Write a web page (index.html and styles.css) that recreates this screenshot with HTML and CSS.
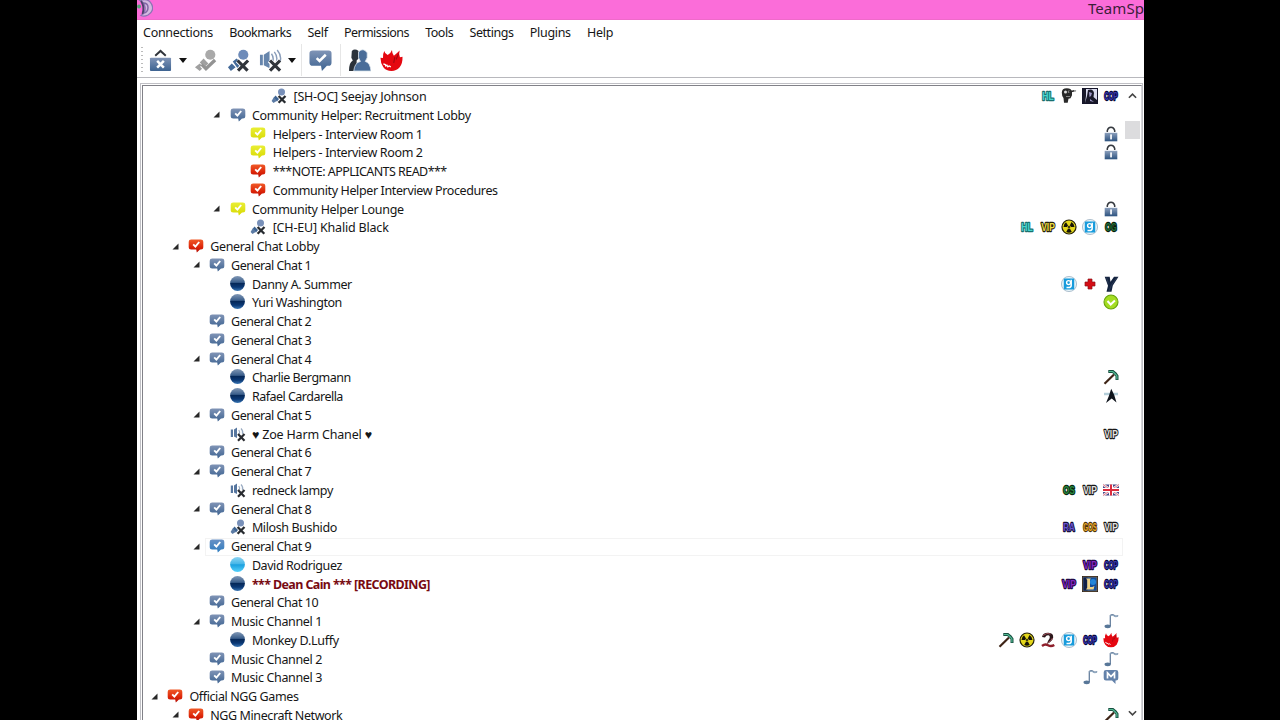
FILE: index.html
```html
<!DOCTYPE html>
<html lang="en">
<head>
<meta charset="utf-8">
<title>TeamSpeak</title>
<link rel="stylesheet" href="styles.css">
</head>
<body>
<svg class="defs" aria-hidden="true">
  <defs>
    <linearGradient id="gBlue" x1="0" y1="0" x2="0" y2="1"><stop offset="0" stop-color="#8094b6"/><stop offset="1" stop-color="#3d6391"/></linearGradient>
    <linearGradient id="gHot" x1="0" y1="0" x2="0" y2="1"><stop offset="0" stop-color="#6991c5"/><stop offset="1" stop-color="#2c7cc0"/></linearGradient>
    <linearGradient id="gYellow" x1="0" y1="0" x2="0" y2="1"><stop offset="0" stop-color="#e9ee35"/><stop offset="1" stop-color="#d8d900"/></linearGradient>
    <linearGradient id="gRed" x1="0" y1="0" x2="0" y2="1"><stop offset="0" stop-color="#f05a28"/><stop offset=".6" stop-color="#dc2408"/><stop offset="1" stop-color="#b40d05"/></linearGradient>
    <linearGradient id="gBall" x1="0" y1="0" x2="0" y2="1"><stop offset="0" stop-color="#8097b5"/><stop offset=".42" stop-color="#3b5f8c"/><stop offset=".5" stop-color="#06295a"/><stop offset=".75" stop-color="#0b3976"/><stop offset="1" stop-color="#3a76b3"/></linearGradient>
    <linearGradient id="gTalk" x1="0" y1="0" x2="0" y2="1"><stop offset="0" stop-color="#8bd4f2"/><stop offset=".45" stop-color="#48b7e8"/><stop offset=".52" stop-color="#1ba0df"/><stop offset="1" stop-color="#55d0fa"/></linearGradient>
    <linearGradient id="gLock" x1="0" y1="0" x2="0" y2="1"><stop offset="0" stop-color="#8b9fbc"/><stop offset="1" stop-color="#2c527f"/></linearGradient>
  </defs>
  <symbol id="bubble" viewBox="0 0 16 16"><path d="M3.200 1.500h9.600q2.500 0 2.500 2.300v5.200q0 2.500-2.500 2.500h-.8L8.800 14.600l-.6-3.100H3.200Q.7 11.500.7 9V3.800q0-2.300 2.500-2.300z"/><path d="M5.200 6.400l2.200 2.200L11.200 4" fill="none" stroke="#fff" stroke-width="1.900"/></symbol>
  <symbol id="ball" viewBox="0 0 16 16"><circle cx="7.500" cy="7.500" r="7.400"/></symbol>
  <symbol id="mic" viewBox="0 0 16 16"><circle cx="10.500" cy="4" r="3.500" fill="#7890b9"/><path d="M4.500 7.500l3.500 3.500-2 2.500-3.500-3.500z" fill="#3e6492"/><path d="M2.600 9.500L6 12.800 2.500 15 .6 13z" fill="#5b7ba5"/><path d="M7.600 8l6.700 6.800M14.500 8L7.600 14.800" stroke="#272b30" stroke-width="2.300"/></symbol>
  <symbol id="spk" viewBox="0 0 16 16"><path d="M.8 3.500h2.200v7.500H.8zM4 3.500l3-2v10.500l-3-1.500z" fill="#56769f"/><path d="M8.800 4q1.400 2 .5 4M11 2.500q2.500 2.500 1.500 5.500" fill="none" stroke="#9aabc2" stroke-width="1.200"/><path d="M8 8l6.500 6.700M14.500 8L8 14.700" stroke="#292b30" stroke-width="2.200"/></symbol>
  <symbol id="lock" viewBox="0 0 16 16"><path d="M4.300 6V4.500Q5 1.200 8 1.200t3.700 3.300V6" fill="none" stroke="#363a40" stroke-width="1.500"/><rect x="1.700" y="6.800" width="12.600" height="8.500" fill="url(#gLock)"/><rect x="7.200" y="8.400" width="1.700" height="5" fill="#fff"/></symbol>
  <symbol id="rad" viewBox="0 0 16 16"><circle cx="8" cy="8" r="7" fill="#e4d71b" stroke="#242108" stroke-width="1.200"/><path d="M8 8H2.500Q2.500 5 5 3.300zM8 8l2.500-5Q13.500 5 13.500 8zM8 8l2.800 5q-2.800 1.300-5.600 0z" fill="#171508"/><circle cx="8" cy="8" r="1.500" fill="#161408" stroke="#e4d71b" stroke-width=".7"/></symbol>
  <symbol id="gmod" viewBox="0 0 16 16"><circle cx="8" cy="8" r="7.600" fill="#e4f2f8" stroke="#9fb4c4" stroke-width=".8"/><rect x="2.800" y="2.500" width="10.400" height="11" fill="#179bdc"/><circle cx="7.600" cy="6.600" r="2" fill="none" stroke="#fff" stroke-width="1.400"/><path d="M10.200 3.800v5.400q0 2.400-2.600 2.400H5.500" fill="none" stroke="#fff" stroke-width="1.500"/></symbol>
  <symbol id="cross" viewBox="0 0 16 16"><path d="M6 3h4v3h3v4h-3v3H6v-3H3V6h3z" fill="#d40c15" stroke="#8d1319" stroke-width=".7"/></symbol>
  <symbol id="why" viewBox="0 0 16 16"><path d="M1.700.8h5l.8 5L11 .8h4.500L9.800 9.500 8.500 15.800H3.500l1.500-6z" fill="#14233f"/><path d="M3.500 1.500l1.800 6M14 1.500L8.500 9 6 15" stroke="#31425d" stroke-width=".7" fill="none"/></symbol>
  <symbol id="okay" viewBox="0 0 16 16"><circle cx="8" cy="8" r="7" fill="#a4dc22" stroke="#68a50b" stroke-width="1.100"/><path d="M4.500 7l3.200 3.500 4.200-4" fill="none" stroke="#fff" stroke-width="2"/></symbol>
  <symbol id="pick" viewBox="0 0 16 16"><path d="M1.500 14.800L11 5.500" stroke="#3e2416" stroke-width="2.200"/><path d="M5.300 2.500h4.500l2.700 2.200 1.500 2.300v4" fill="none" stroke="#174f40" stroke-width="3"/><path d="M6 2.500h3.700l2.600 2.300 1.600 2.200v3.200" fill="none" stroke="#54bc94" stroke-width="1.200"/></symbol>
  <symbol id="trek" viewBox="0 0 16 16"><path d="M1 6h14" stroke="#b4ced9" stroke-width="2.500"/><path d="M8.200.8q3.600 6 5.300 13.700L8.700 10.500 3 15Q6.200 8 8.200.8z" fill="#10151d"/></symbol>
  <symbol id="note" viewBox="0 0 16 16"><path d="M7.300 13V2.500q2-1.600 4 0t3.700 0" fill="none" stroke="#667f9e" stroke-width="1.300"/><path d="M7.300 3q2-1.500 4 0 1.800 1.500 3.700-.7" fill="none" stroke="#91a8bf" stroke-width="1.100"/><ellipse cx="4.700" cy="13.300" rx="3.200" ry="1.900" fill="#587798"/></symbol>
  <symbol id="flag" viewBox="0 0 16 16"><rect y="2.500" width="16" height="11" fill="#454888"/><path d="M0 2.500l16 11M16 2.500L0 13.500" stroke="#f6e8ed" stroke-width="2.600"/><path d="M0 2.500l16 11M16 2.500L0 13.500" stroke="#d96475" stroke-width=".8"/><path d="M8 2.500v11M0 8h16" stroke="#fff" stroke-width="4"/><path d="M8 2.500v11M0 8h16" stroke="#dc2b3d" stroke-width="2"/></symbol>
  <symbol id="flame" viewBox="0 0 24 24"><path d="M4.500 2Q5 5 8 6.300 11 5 12.500 1q0 3.500 2 6Q17.500 4.500 20.500 1.500q-1.200 4 .3 7l2.700-.5q.2 7-3 11-3.500 4-8.500 4-5.500 0-8.500-4Q.4 14.500.5 9.200l2.600.3Q2.500 5.500 4.500 2z" fill="#e50710"/><path d="M15.500 8.500l-1.200 6M19.300 5l-2.500 6" stroke="#9d0810" stroke-width="1.100"/><path d="M3.500 15.500l2 .8.500 1.300 1.200-.8 1 1.700 1.300-.8 1.800 1" stroke="#fff" stroke-width="1.400" fill="none"/></symbol>
  <symbol id="two" viewBox="0 0 16 16"><path d="M2 5Q3 .5 8.500.8q5 .3 4.700 4.700-.4 3.400-6.200 6.500Q7.500 9 9.500 6.500q1-3-1.500-3.200Q6 3.300 5 5.500z" fill="#2b171a"/><path d="M3 3.500q4-3.300 7.500-1.500M12.500 6q-1 3-5 5" stroke="#a0525d" stroke-width="1" fill="none"/><path d="M2 14q3-2.500 6-.8t6.300-.2" fill="none" stroke="#8e1f2b" stroke-width="2.400"/></symbol>
  <symbol id="head" viewBox="0 0 16 16"><path d="M.8 4.500q0-4.300 5-4.300t5.200 4v3l-1.500 3-2 .5-.8 4H3L2.500 10Q.8 8 .8 4.500z" fill="#292929"/><circle cx="4.500" cy="4" r="1.500" fill="#ddd"/><circle cx="8" cy="3.800" r="1.300" fill="#888"/><path d="M8 4l5.500-1.200" stroke="#272727" stroke-width="1.500"/><circle cx="14.300" cy="2.800" r=".9" fill="#999"/><path d="M5 8.500h4" stroke="#888"/></symbol>
  <symbol id="photo" viewBox="0 0 16 16"><rect width="16" height="16" fill="#15152a"/><rect x="1" y="1" width="14" height="14" fill="#d9daed"/><path d="M1 1h3v7l-1 7H1zM6 2q5-2 6 3l-.5 4L15 12v3H3l2-7z" fill="#191929"/><path d="M7 4l3 1-1 3-1.500 1zM8 11l4 3-4-1z" fill="#9d97c6"/></symbol>
  <symbol id="league" viewBox="0 0 16 16"><rect width="16" height="16" fill="#231e23"/><rect x="1" y="1" width="14" height="14" fill="#124d9b" stroke="#97733c" stroke-width=".7"/><path d="M1.500 1.500h4v13h-4z" fill="#101f48"/><circle cx="11" cy="6" r="3" fill="#2385d9"/><path d="M4 2.500h4.800L8 4v7h2.400l2-1-.8 3.500H4l1.200-1.800V4z" fill="#efd287"/></symbol>
  <symbol id="msg" viewBox="0 0 16 16"><path d="M3 1h10q2.300 0 2.300 2.300v6q0 2.300-2.300 2.300h-.5V15L9 11.600H3Q.7 11.600.7 9.300v-6Q.7 1 3 1z" fill="#6482aa"/><path d="M4.500 9.500V3.800L8 7.500l3.500-3.700v5.700" stroke="#fff" stroke-width="1.700" fill="none"/></symbol>
</svg>

<main class="window">
  <header class="titlebar">
    <svg class="app-icon" viewBox="0 0 16 18"><path d="M3 1.500q8-3 11.500 3.500T11 16q-4 2-7 .5Q9 13 8 8T3 1.500z" fill="#d4b9e0" stroke="#8c73b5" stroke-width="1.300"/><path d="M6 4q5 0 5 4.500T7 14" fill="none" stroke="#8267a5" stroke-width="1.500"/><path d="M4 2q4 6 1.500 13" fill="none" stroke="#4b416c" stroke-width="1.800"/><circle cx="2" cy="7.500" r="2" fill="#52a878"/></svg>
    <span class="title" data-w="56">TeamSp</span>
  </header>
  <nav class="menu">
    <span data-w="70">Connections</span><span data-w="62">Bookmarks</span><span data-w="20">Self</span><span data-w="65">Permissions</span><span data-w="28">Tools</span><span data-w="44">Settings</span><span data-w="41">Plugins</span><span data-w="26">Help</span>
  </nav>
  <div class="toolbar">
    <i class="grip"></i>
    <svg class="tool conn" viewBox="0 0 24 24"><path d="M6.500 7L12 2l5.500 5" fill="none" stroke="#30343b" stroke-width="2"/><rect x="1" y="9" width="22" height="14" rx="1" fill="url(#gBlue)"/><path d="M8.500 12.500l7 7m0-7l-7 7" stroke="#fff" stroke-width="2.600"/></svg>
    <i class="drop"></i>
    <svg class="tool mute" viewBox="0 0 24 24"><circle cx="17" cy="6" r="5.300" fill="#a9a9a9"/><path d="M1 19l5-4 4 4-4 4zM6 14l4-4 5 5-4 4z" fill="#a0a0a0"/><path d="M8 17l4.500 4.500L23 12" fill="none" stroke="#fff" stroke-width="4.500"/><path d="M8 16l4.500 4.500L22 11.500" fill="none" stroke="#939393" stroke-width="3.500"/></svg>
    <svg class="tool micx" viewBox="0 0 24 24"><circle cx="17" cy="6" r="5.300" fill="#6e8bb9"/><path d="M1 19l4-4 4 4-5 4zM6 13l4-3 6 6-5 4z" fill="#456b99"/><path d="M11 12l11 11M22 12L11 23" stroke="#fff" stroke-width="5"/><path d="M11 12l10.500 10.500M22 12L11.500 22.500" stroke="#30343a" stroke-width="3.300"/></svg>
    <svg class="tool spkx" viewBox="0 0 24 24"><path d="M1 6h3v11H1zM5 6l6-4v18l-6-3z" fill="#6685ac"/><path d="M13 5q3 4 1 9M16 3q4 5 2 11M19 1q5 6 3 12" fill="none" stroke="#8a9db9" stroke-width="1.500"/><path d="M11 12l11 11M22 12L11 23" stroke="#fff" stroke-width="5"/><path d="M11.500 12L22 22.500M22 12L11.500 22.500" stroke="#30343a" stroke-width="3.300"/></svg>
    <i class="drop drop-b"></i><i class="rule rule-a"></i>
    <svg class="tool chat" viewBox="0 0 24 24"><path d="M4 1.500h16.500q3 0 3 3V14q0 3.500-3 3.500h-1.800L13.500 23l-1-5.500H4Q.5 17.500.5 14V4.500q0-3 3.500-3z" fill="url(#gBlue)"/><path d="M8 9.500l3 3L17.500 6" fill="none" stroke="#fff" stroke-width="2.600"/></svg>
    <i class="rule rule-b"></i>
    <svg class="tool people" viewBox="0 0 24 24"><path d="M4 2q3-3 7 0v8l-2 2v11H1q0-9 4-11L3.500 9z" fill="#2b323a"/><path d="M11 3q5-5 9 1v5l-2 4q5 1 6 10H6q1-9 7-10l-2-4z" fill="#4a6d99" stroke="#dce5ed" stroke-width=".8"/></svg>
    <svg class="tool fire"><use href="#flame"/></svg>
  </div>
  <section class="panel">
    <div class="tree" id="tree"></div>
    <div class="scrollbar">
      <svg viewBox="0 0 10 8"><path d="M1 6l4-4 4 4" fill="none" stroke="#444" stroke-width="1.800"/></svg>
      <i class="thumb"></i>
      <svg class="down" viewBox="0 0 10 8"><path d="M1 2l4 4 4-4" fill="none" stroke="#444" stroke-width="1.800"/></svg>
    </div>
  </section>
</main>
<script src="tree.js"></script>
</body>
</html>
```
FILE: styles.css
```css
* { box-sizing: border-box; }
body { margin: 0; width: 1280px; height: 720px; overflow: hidden; background: #000; font: 12.500px "Noto Sans", "Open Sans", sans-serif; color: #161616; }
.defs { width: 0; height: 0; display: block; }
.window { width: 1007px; height: 720px; margin-left: 137px; background: #fff; overflow: hidden; display: flex; flex-direction: column; }
.titlebar { height: 20px; flex: none; background: #fb6dd9; border-bottom: 1px solid #ef6aca; display: flex; justify-content: space-between; }
.app-icon { width: 16px; height: 18px; margin-top: -1px; }
.title { font-size: 15px; line-height: 17px; color: #3c1e39; white-space: nowrap; }
.menu { height: 24px; flex: none; display: flex; gap: 16.300px; padding-left: 6px; line-height: 25px; }
.menu span { white-space: nowrap; }
.toolbar { height: 34px; flex: none; border-bottom: 1px solid #b8b8bd; display: flex; align-items: center; padding: 0 0 1px 4px; }
.grip { width: 2px; height: 26px; background: repeating-linear-gradient(#bbb 0 1px, transparent 1px 4px); margin-right: 6px; }
.tool { width: 23px; height: 23px; flex: none; }
.drop { border: 4px solid transparent; border-top: 5px solid #111; border-bottom: 0; margin-left: 7px; }
.drop-b { margin-left: 6px; }
.mute { margin-left: 7px; }
.micx { margin-left: 10px; }
.spkx { margin-left: 9px; }
.rule { width: 1px; height: 32px; background: #e6e6e6; }
.rule-a { margin-left: 5px; }
.chat { margin-left: 7px; }
.rule-b { margin-left: 8px; }
.people { margin-left: 7px; }
.fire { margin-left: 9px; }
.panel { margin: 5px 0 0 3px; height: 637px; width: 1003px; flex: none; display: flex; border: 1px solid #c0c0c5; border-bottom: 0; padding: 1px 0 0 1px; }
.tree { flex: 1; border-left: 1px solid #818188; border-top: 1px solid #818188; padding-top: 1.200px; overflow: hidden; }
.row { height: 18.760px; display: flex; align-items: center; width: 980px; }
.row.hot .content { border: 1px solid #f3f3f3; }
.indent { flex: none; }
.arrow { flex: none; width: 7px; height: 7px; margin: 0 0 1px -.5px; }
.content { display: flex; align-items: center; flex: 1; height: 18px; margin-left: 5px; border: 1px solid transparent; }
.state { width: 16px; height: 16px; flex: none; margin: -1px 6.300px 0 3.200px; }
.label { white-space: nowrap; line-height: 18px; padding-top: 1px; }
.recording { color: #780a12; font-weight: bold; }
.badges { display: flex; gap: 5px; margin: -1px 3px 0 auto; }
.badges svg { width: 16px; height: 16px; overflow: visible; }
.badges text { font: bold 11.500px "Liberation Sans", Arial, sans-serif; paint-order: stroke; stroke-width: 2.400px; stroke-linejoin: round; }
.scrollbar { width: 18px; flex: none; border-top: 1px solid #818188; display: flex; flex-direction: column; align-items: center; padding: 6px 0 0 0; border-right: 1px solid #d4d4d8; }
.scrollbar svg { width: 9px; height: 8px; }
.thumb { width: 15px; height: 18px; background: #dcdcde; margin-top: 21px; }
.scrollbar .down { margin-top: auto; margin-bottom: 3px; }
```
FILE: tree.js
```js
// level, state icon, label, label width, expanded, badges
const rows = [
  [5, 'mic', '[SH-OC] Seejay Johnson', 133, 0, 'HL head photo COP'],
  [3, 'blue', 'Community Helper: Recruitment Lobby', 219, 1, ''],
  [4, 'yellow', 'Helpers - Interview Room 1', 150, 0, 'lock'],
  [4, 'yellow', 'Helpers - Interview Room 2', 150, 0, 'lock'],
  [4, 'red', '***NOTE: APPLICANTS READ***', 174, 0, ''],
  [4, 'red', 'Community Helper Interview Procedures', 225, 0, ''],
  [3, 'yellow', 'Community Helper Lounge', 152, 1, 'lock'],
  [4, 'mic', '[CH-EU] Khalid Black', 116, 0, 'HL VIPY rad gmod OG'],
  [1, 'red', 'General Chat Lobby', 109, 1, ''],
  [2, 'blue', 'General Chat 1', 80, 1, ''],
  [3, 'ball', 'Danny A. Summer', 100, 0, 'gmod cross why'],
  [3, 'ball', 'Yuri Washington', 90, 0, 'okay'],
  [2, 'blue', 'General Chat 2', 80, 0, ''],
  [2, 'blue', 'General Chat 3', 80, 0, ''],
  [2, 'blue', 'General Chat 4', 80, 1, ''],
  [3, 'ball', 'Charlie Bergmann', 99, 0, 'pick'],
  [3, 'ball', 'Rafael Cardarella', 91, 0, 'trek'],
  [2, 'blue', 'General Chat 5', 80, 1, ''],
  [3, 'spk', '♥ Zoe Harm Chanel ♥', 120, 0, 'VIP'],
  [2, 'blue', 'General Chat 6', 80, 0, ''],
  [2, 'blue', 'General Chat 7', 80, 1, ''],
  [3, 'spk', 'redneck lampy', 81, 0, 'OS VIP flag'],
  [2, 'blue', 'General Chat 8', 80, 1, ''],
  [3, 'mic', 'Milosh Bushido', 85, 0, 'RA GOS VIP'],
  [2, 'hot', 'General Chat 9', 80, 1, ''],
  [3, 'talk', 'David Rodriguez', 90, 0, 'VIPP COP'],
  [3, 'ball', '*** Dean Cain *** [RECORDING]', 178, 0, 'VIPP league COP'],
  [2, 'blue', 'General Chat 10', 87, 0, ''],
  [2, 'blue', 'Music Channel 1', 91, 1, 'note'],
  [3, 'ball', 'Monkey D.Luffy', 87, 0, 'pick rad two gmod COP flame'],
  [2, 'blue', 'Music Channel 2', 91, 0, 'note'],
  [2, 'blue', 'Music Channel 3', 91, 0, 'note msg'],
  [0, 'red', 'Official NGG Games', 109, 1, ''],
  [1, 'red', 'NGG Minecraft Network', 132, 1, 'pick']
];
const tags = {
  HL: ['HL', '#48d6ce', '#19706f'], COP: ['COP', '#3838b0', '#07073a'],
  VIPY: ['VIP', '#f0df45', '#25230a'], OG: ['OG', '#237039', '#071c0b'],
  VIP: ['VIP', '#e4e4e4', '#181818'], OS: ['OS', '#2b8b42', '#09270e'],
  RA: ['RA', '#6854d2', '#15103a'], GOS: ['GOS', '#edae2b', '#4b320b'],
  VIPP: ['VIP', '#8127c0', '#210844']
};
const fills = { blue: 'gBlue', yellow: 'gYellow', red: 'gRed', hot: 'gHot', ball: 'gBall', talk: 'gTalk' };
function stateIcon(kind) {
  const shape = kind === 'mic' || kind === 'spk' ? kind : kind === 'ball' || kind === 'talk' ? 'ball' : 'bubble';
  return `<svg class="state" fill="url(#${fills[kind] || 'gBlue'})"><use href="#${shape}"/></svg>`;
}
function badge(name) {
  if (!tags[name]) return `<svg><use href="#${name}"/></svg>`;
  const [text, fill, edge] = tags[name];
  const w = text.length === 2 ? 11.5 : 13.6;
  return `<svg viewBox="0 0 16 16"><text x="${8 - w / 2}" y="12" textLength="${w}" lengthAdjust="spacingAndGlyphs" fill="${fill}" stroke="${edge}">${text}</text></svg>`;
}
document.getElementById('tree').innerHTML = rows.map(([level, icon, label, width, open, badges]) => {
  const arrow = `<svg class="arrow" viewBox="0 0 7 7">${open ? '<path d="M6.500.5v6h-6z" fill="#282828"/>' : ''}</svg>`;
  const marks = badges ? badges.split(' ').map(badge).join('') : '';
  return `<div class="row ${icon === 'hot' ? 'hot' : ''}"><span class="indent" style="width:${8.5 + level * 20.8}px"></span>${arrow}<div class="content">${stateIcon(icon)}<span class="label ${label.includes('RECORDING') ? 'recording' : ''}" data-w="${width}">${label}</span><span class="badges">${marks}</span></div></div>`;
}).join('');
document.querySelectorAll('[data-w]').forEach(el => {
  const extra = Number(el.dataset.w) - el.getBoundingClientRect().width;
  el.style.letterSpacing = extra / el.textContent.length + 'px';
});
```
